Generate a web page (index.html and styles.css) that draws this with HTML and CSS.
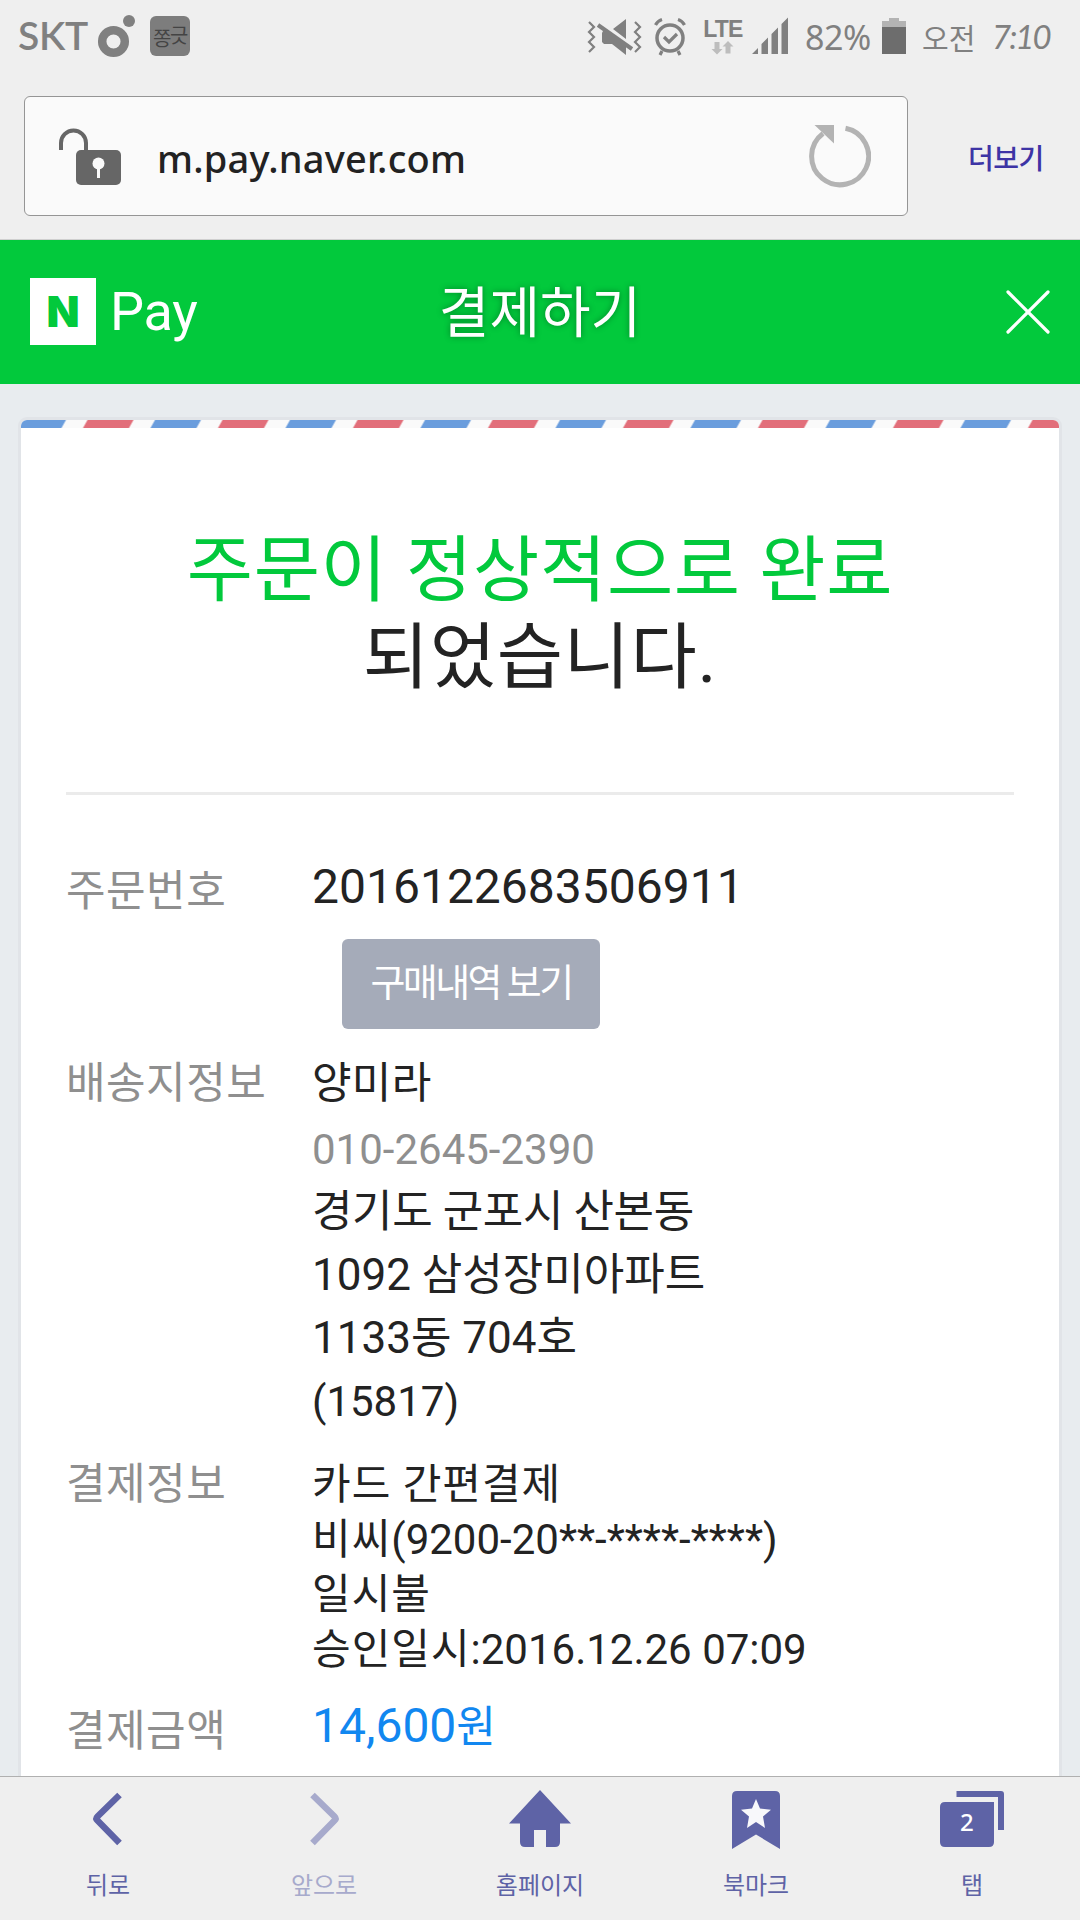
FILE: index.html
```html
<!DOCTYPE html>
<html lang="ko">
<head>
<meta charset="utf-8">
<title>결제하기</title>
<link rel="stylesheet" href="styles.css">
</head>
<body>
<div class="screen">
  <header class="browser">
    <div class="status">
      <div class="status-left">
        <span class="carrier">SKT</span>
        <svg class="ring" width="38" height="46" viewBox="0 0 38 46"><circle cx="16.500" cy="29.500" r="11.300" fill="none" stroke="#808080" stroke-width="8.500"/><circle cx="32" cy="9" r="6" fill="#808080"/></svg>
        <span class="app"><i>쫑</i><i>긋</i></span>
      </div>
      <div class="status-right">
        <svg class="mute" width="56" height="40" viewBox="0 0 56 40"><g fill="none" stroke="#808080" stroke-width="2.200"><path d="M2 6l5 5-5 5 5 5-5 5 5 5-5 5"/><path d="M48 6l5 5-5 5 5 5-5 5 5 5-5 5"/></g><path fill="#808080" d="M39 3v20L26 13zM16 15h4l19 13v11L25 28h-8l-2-2v-9z"/><path d="M11 9l34 24" stroke="#808080" stroke-width="4"/></svg>
        <svg class="alarm" width="34" height="40" viewBox="0 0 34 40"><g fill="none" stroke="#808080"><circle cx="17" cy="22" r="13" stroke-width="3.500"/><path d="M11 21l5 5 8-8" stroke-width="3.200"/><path d="M2.500 9q2-4 6.500-5.500M31.500 9q-2-4-6.500-5.500M9 35l-2 4M25 35l2 4" stroke-width="3.200"/></g></svg>
        <div class="lte"><b>LTE</b><svg width="24" height="14" viewBox="0 0 24 14"><path fill="#bdbdbd" d="M3.500 1h5v7h3L6 13.500 0.500 8h3zM14.500 12.500h5v-7h3L17 0l-5.500 5.500h3z"/></svg></div>
        <svg class="signal" width="37" height="37" viewBox="0 0 37 37"><path fill="#808080" d="M0 37l6-6v6zM9.500 37V27l6.500-6.500V37zM19.500 37V17l6.500-6.500V37zM29.500 37V7l6.500-6.500V37z"/></svg>
        <span class="percent">82%</span>
        <svg class="battery" width="24" height="36" viewBox="0 0 24 36"><path fill="#b3b3b3" d="M7 0h10v3h7v6H0V3h7z"/><path fill="#6d6d6d" d="M0 9h24v27H0z"/></svg>
        <span class="ampm">오전</span>
        <span class="clock">7:10</span>
      </div>
    </div>
    <div class="address">
      <div class="urlbox">
        <svg class="lock" width="64" height="60" viewBox="0 0 64 60"><path d="M3 23v-7a12.500 12.500 0 0 1 25 0v8" fill="none" stroke="#666" stroke-width="4"/><rect x="18" y="23" width="45" height="35" rx="5" fill="#666"/><circle cx="40.500" cy="36.500" r="6" fill="#fafafa"/><path d="M40.500 40v11" stroke="#fafafa" stroke-width="3"/></svg>
        <span class="url">m.pay.naver.com</span>
        <svg class="reload" width="64" height="64" viewBox="0 0 64 64"><path d="M38.500 4.300A28.500 28.500 0 1 1 16 9.500" fill="none" stroke="#b3b3b3" stroke-width="5"/><path d="M7.500 1H27v18.500z" fill="#b3b3b3"/></svg>
      </div>
      <a class="more">더보기</a>
    </div>
  </header>

  <div class="paybar">
    <div class="brand"><span class="mark">N</span><span class="pay">Pay</span></div>
    <h1 class="page-title">결제하기</h1>
    <svg class="close" width="44" height="44" viewBox="0 0 44 44"><path d="M2 2l40 40M42 2L2 42" stroke="#fff" stroke-width="3.200" stroke-linecap="round"/></svg>
  </div>

  <main class="content">
    <section class="card">
      <svg class="airmail" width="1038" height="8" viewBox="21 0 1038 8">
        <defs><pattern id="mail" x="15.500" y="0" width="135" height="8" patternUnits="userSpaceOnUse"><path fill="#6a9ddd" d="M4.500 0h46L46 8H0z"/><path fill="#e26e7a" d="M72 0h46l-4.500 8h-46z"/></pattern></defs>
        <path fill="#fafafa" d="M21 0h1038v8H21z"/><path fill="url(#mail)" d="M21 0h1038v8H21z"/>
      </svg>
      <h2 class="done"><em>주문이 정상적으로 완료</em><br>되었습니다.</h2>
      <dl class="details">
        <div class="row order"><dt>주문번호</dt><dd><p class="big">2016122683506911</p><a class="history">구매내역 보기</a></dd></div>
        <div class="row ship"><dt>배송지정보</dt><dd><p class="name">양미라</p><p class="phone">010-2645-2390</p><p class="addr"><span>경기도 군포시 산본동</span><br>1092 삼성장미아파트<br>1133동 704호</p><p class="zip">(15817)</p></dd></div>
        <div class="row payment"><dt>결제정보</dt><dd><p>카드 간편결제</p><p class="card-no"><span>비씨</span>(9200-20**-****-****)</p><p>일시불</p><p class="approved"><span>승인일시</span>:2016.12.26 07:09</p></dd></div>
        <div class="row total"><dt>결제금액</dt><dd><p class="big price">14,600<span>원</span></p></dd></div>
      </dl>
    </section>
  </main>

  <nav class="tabs">
    <a><svg width="64" height="64" viewBox="0 0 64 64"><path d="M43.500 9L21.500 30.500q-2 2 0 4L43.500 57" transform="translate(0 1)" fill="none" stroke="#5e63a6" stroke-width="6.500"/></svg><span>뒤로</span></a>
    <a class="off"><svg width="64" height="64" viewBox="0 0 64 64"><path d="M20.500 9l22 21.500q2 2 0 4L20.500 57" transform="translate(0 1)" fill="none" stroke="#a7aacc" stroke-width="6.500"/></svg><span>앞으로</span></a>
    <a><svg width="64" height="64" viewBox="0 0 64 64"><path fill="#5e63a6" d="M32 5l31 33.500H52V57q0 5-5 5h-9V45H26v17h-9q-5 0-5-5V38.500H1z"/></svg><span>홈페이지</span></a>
    <a><svg width="64" height="64" viewBox="0 0 64 64"><path fill="#5e63a6" d="M8 64V11q0-5 5-5h38q5 0 5 5v53L32 49.500z"/><path fill="#f8f8fb" d="M32 14l4 9.500 11 1.200-8 6.800 2 11.500-9-6-9 6 2-11.500-8-6.800 11-1.200z"/></svg><span>북마크</span></a>
    <a class="count"><svg width="64" height="64" viewBox="0 0 64 64"><path d="M16.500 9h44.500v36" fill="none" stroke="#5e63a6" stroke-width="6" stroke-linejoin="round"/><path fill="#5e63a6" d="M5 17h49v40q0 5-5 5H5q-5 0-5-5V22q0-5 5-5z"/></svg><b>2</b><span>탭</span></a>
  </nav>
</div>
</body>
</html>
```
FILE: styles.css
```css
* { box-sizing: border-box; margin: 0; padding: 0; }
body { width: 1080px; height: 1920px; overflow: hidden; background: #e8ecef; font-family: Roboto, "Noto Sans CJK KR", sans-serif; color: #232323; }
svg { display: block; flex: none; }
.screen { display: flex; flex-direction: column; height: 1920px; }

.browser { flex: none; height: 240px; background: #efefef; border-bottom: 1px solid #cfcfcf; }
.status { display: flex; justify-content: space-between; height: 96px; padding: 12px 30px 0 18px; color: #808080; white-space: nowrap; }
.status-left, .status-right { display: flex; align-items: flex-start; }
.carrier { width: 79px; font: 600 39px/47px Lato, sans-serif; letter-spacing: -0.3px; }
.app { display: flex; justify-content: center; align-items: center; width: 40px; height: 40px; margin: 4px 0 0 15px; border-radius: 6px; background: #7d7d7d; color: #444; }
.app i { font: 20px/38px "Noto Sans CJK KR", sans-serif; letter-spacing: -1.5px; }
.app i:first-child { padding-top: 3px; }
.app i:last-child { padding-bottom: 3px; }
.mute { margin: 4px 10px 0 0; }
.alarm { margin: 4px 16px 0 0; }
.lte { display: flex; flex-direction: column; align-items: center; width: 40px; margin: 7px 9px 0 0; }
.lte b { font: 700 23px/20px "Liberation Sans", sans-serif; letter-spacing: -0.8px; }
.lte svg { margin-top: 2px; }
.signal { margin: 5px 16px 0 0; }
.percent { width: 77px; font: 34px/50px "Noto Sans", sans-serif; letter-spacing: -.5px; }
.battery { margin: 6px 16px 0 0; }
.ampm { width: 70px; font: 29px/50px "Noto Sans CJK KR", sans-serif; }
.clock { width: 58px; font: italic 33px/48px Lato, sans-serif; letter-spacing: -2px; }

.address { display: flex; align-items: center; height: 120px; padding-left: 24px; }
.urlbox { display: flex; align-items: center; width: 884px; height: 120px; padding: 0 36px 0 33px; background: #fafafa; border: 1px solid #959595; border-radius: 6px; }
.lock { margin: 1px 35px 0 0; }
.url { flex: 1; padding-top: 3px; font: 500 38px/52px "Noto Sans", sans-serif; color: #222; letter-spacing: .2px; white-space: nowrap; }
.more { margin-left: 60px; padding-top: 2px; font: 500 28px/40px "Noto Sans CJK KR", sans-serif; color: #3d34a5; letter-spacing: -.5px; }

.paybar { flex: none; display: grid; grid-template-columns: 1fr auto 1fr; align-items: center; height: 144px; padding: 0 30px; background: #02c93c; color: #fff; }
.brand { display: flex; align-items: center; padding-bottom: 2px; }
.mark { display: flex; justify-content: center; align-items: center; width: 66px; height: 67px; margin-right: 14px; background: #fff; font: 900 43px/67px Inter, sans-serif; color: #02c93c; }
.pay { padding-top: 2px; font: 54px/60px Roboto, sans-serif; letter-spacing: -.3px; }
.page-title { padding-bottom: 9px; font: 400 55px/70px "Noto Sans CJK KR", sans-serif; text-shadow: 0 0 6px rgba(0, 0, 0, .35); }
.close { justify-self: end; }

.content { flex: 1; min-height: 0; overflow: hidden; padding: 33px 18px 0; }
.card { height: 1500px; overflow: hidden; border: 3px solid #e1e4e8; border-radius: 9px; background: #fff; }
.done { padding: 99px 0 91px; margin: 0 45px; border-bottom: 3px solid #ebebeb; font-weight: 400; font-size: 72px; line-height: 87px; letter-spacing: .7px; text-align: center; white-space: nowrap; }
.done em { font-style: normal; color: #02c93c; }

.details { padding: 64px 45px 0; }
.row { display: grid; grid-template-columns: 246px 1fr; }
dt { font-size: 43px; line-height: 56px; letter-spacing: .5px; color: #8f8f8f; white-space: nowrap; }
dd { white-space: nowrap; }
.big { font-size: 48px; line-height: 56px; }
.order dt { padding-top: 4px; }
.total dt { padding-top: 5px; }
.history { display: block; width: 258px; height: 90px; margin: 24px 0 0 30px; border-radius: 6px; background: #a5abb9; color: #fff; font-size: 38px; line-height: 88px; letter-spacing: -2.6px; text-align: center; }
.ship { margin-top: 26px; }
.name { font-size: 43px; line-height: 56px; letter-spacing: .3px; }
.phone { margin-top: 7px; font-size: 42px; line-height: 63px; color: #8f8f8f; }
.addr { font-size: 44px; line-height: 63px; }
.addr span { letter-spacing: -.4px; }
.zip { font-size: 42px; line-height: 63px; }
.payment { margin-top: 23px; }
.payment dd { padding-top: 1px; font-size: 42px; line-height: 55px; }
.payment p:nth-child(odd), .payment span { letter-spacing: 1px; }
.total { margin-top: 21px; }
.price { color: #1187f0; }
.price span { font-size: 43px; }

.tabs { flex: none; display: grid; grid-template-columns: repeat(5, 1fr); height: 144px; border-top: 1px solid #b0b0b0; background: #efefef; color: #5e63a6; }
.tabs a { position: relative; display: flex; flex-direction: column; align-items: center; padding-top: 8px; }
.tabs span { margin-top: 17px; font: 24px/36px "Noto Sans CJK KR", sans-serif; }
.tabs .off { color: #a7aacc; }
.count b { position: absolute; left: 96px; top: 28px; font: 500 24px/34px "Noto Sans", sans-serif; color: #fff; }
```
